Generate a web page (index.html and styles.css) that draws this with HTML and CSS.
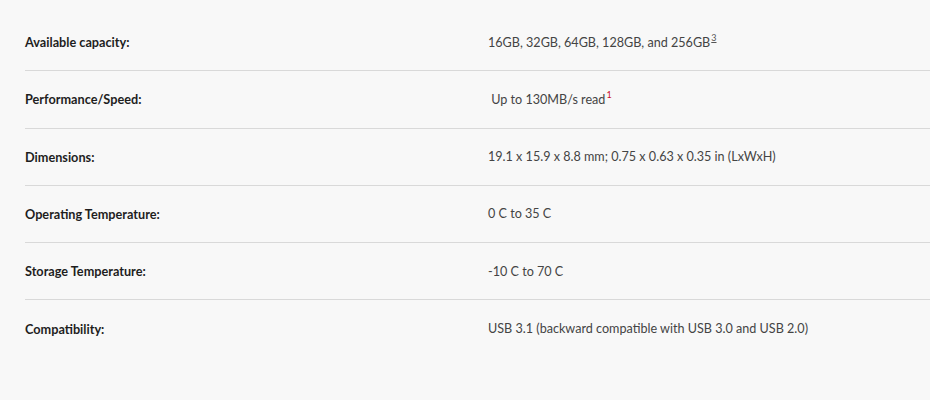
FILE: index.html
```html
<!DOCTYPE html>
<html lang="en">
<head>
<meta charset="utf-8">
<title>Specifications</title>
<link rel="stylesheet" href="styles.css">
</head>
<body>
<div class="specs">
  <div class="spec-row">
    <div class="spec-label">Available capacity:</div>
    <div class="spec-value">16GB, 32GB, 64GB, 128GB, and 256GB<sup class="fn-link">3</sup></div>
  </div>
  <div class="spec-row">
    <div class="spec-label">Performance/Speed:</div>
    <div class="spec-value">&nbsp;Up to 130MB/s read<sup class="fn-red">1</sup></div>
  </div>
  <div class="spec-row">
    <div class="spec-label">Dimensions:</div>
    <div class="spec-value">19.1 x 15.9 x 8.8 mm; 0.75 x 0.63 x 0.35 in (LxWxH)</div>
  </div>
  <div class="spec-row">
    <div class="spec-label">Operating Temperature:</div>
    <div class="spec-value">0 C to 35 C</div>
  </div>
  <div class="spec-row">
    <div class="spec-label">Storage Temperature:</div>
    <div class="spec-value">-10 C to 70 C</div>
  </div>
  <div class="spec-row last">
    <div class="spec-label">Compatibility:</div>
    <div class="spec-value">USB 3.1 (backward compatible with USB 3.0 and USB 2.0)</div>
  </div>
</div>
</body>
</html>
```
FILE: styles.css
```css
html, body {
  margin: 0;
  padding: 0;
  background: #f8f8f8;
}
body {
  font-family: Lato, "Liberation Sans", sans-serif;
  width: 930px;
  height: 400px;
  overflow: hidden;
}
.specs {
  padding: 14px 0 0 25px;
}
.spec-row {
  display: grid;
  grid-template-columns: 463px 1fr;
  align-items: center;
  height: 57.25px;
  box-sizing: border-box;
  border-bottom: 1px solid #d9d9d9;
}
.spec-row.last {
  border-bottom: none;
}
.spec-label {
  font-size: 12.7px;
  font-weight: 700;
  color: #1e1e1e;
}
.spec-value {
  font-size: 12.6px;
  color: #444;
}
sup {
  font-size: 9px;
  line-height: 0;
  vertical-align: 6px;
  margin-left: 1px;
}
.fn-link {
  color: #555;
  text-decoration: underline;
}
.fn-red {
  color: #c8102e;
}
```
